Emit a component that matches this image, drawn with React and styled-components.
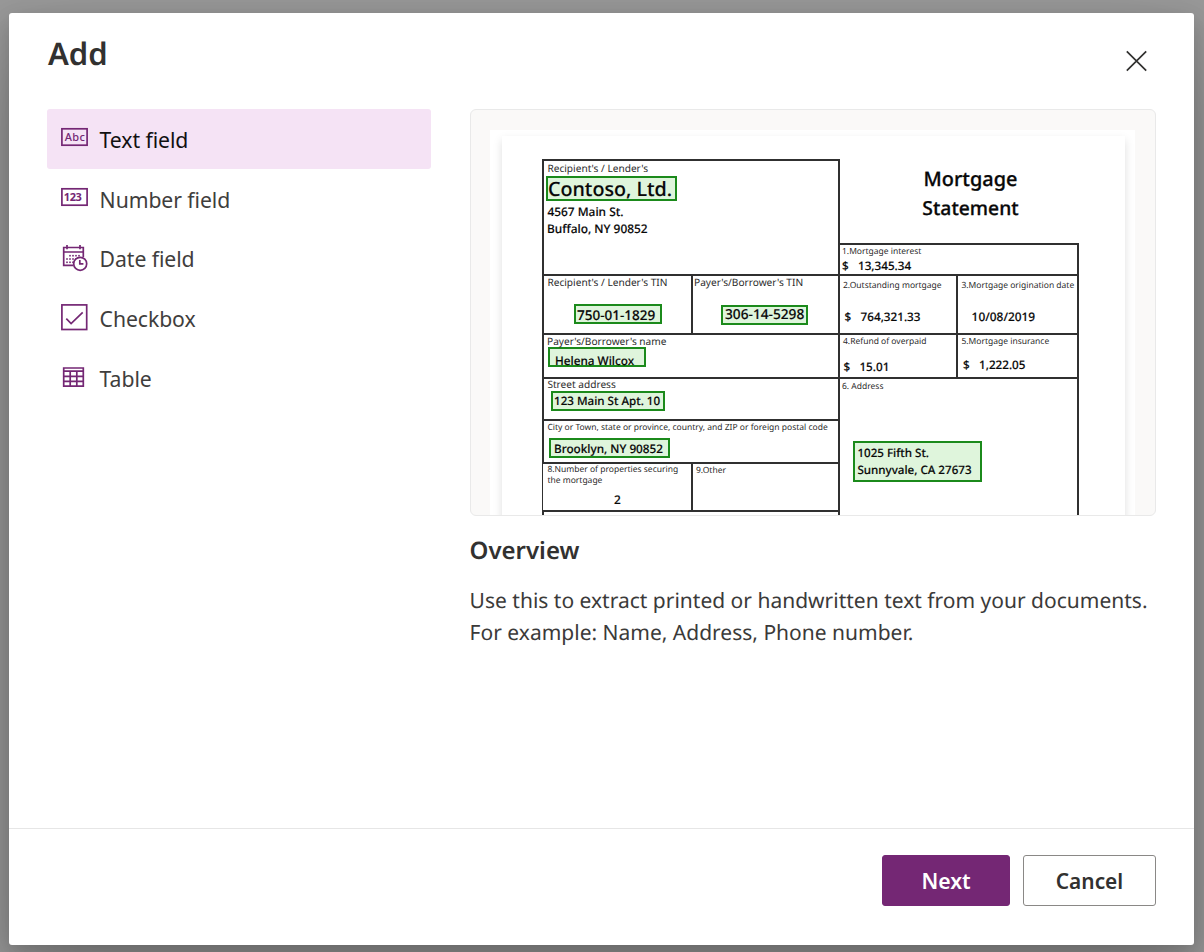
import React, { useState } from "react";
import styled, { createGlobalStyle } from "styled-components";

const purple = "#742774";
const ink = "#303030";

const GlobalStyle = createGlobalStyle`
  *, *::before, *::after { box-sizing: border-box; }
  body {
    margin: 0;
    font-family: "Noto Sans", "Open Sans", sans-serif;
    color: #323130;
    text-rendering: geometricPrecision;
  }
`;

const Overlay = styled.div`
  height: 952px;
  overflow: hidden;
  padding: 13px 10px 7px 9px;
  background: #999999;
`;

const Dialog = styled.section`
  display: flex;
  flex-direction: column;
  height: 932px;
  border-radius: 3px;
  background: #ffffff;
  box-shadow: 0 38px 86px rgba(0, 0, 0, 0.22), 0 7px 22px rgba(0, 0, 0, 0.18);
`;

const Header = styled.header`
  display: flex;
  justify-content: space-between;
  height: 96px;
  padding: 21px 43px 0 39px;
`;

const Title = styled.h1`
  margin: 0;
  font-size: 31px;
  font-weight: 600;
  line-height: 40px;
`;

const CloseButton = styled.button`
  width: 30px;
  height: 30px;
  margin-top: 12px;
  padding: 0;
  border: 0;
  background: none;
  svg { display: block; }
`;

const Body = styled.div`
  display: flex;
  flex: 1;
  gap: 39px;
  padding: 0 38px;
`;

const Nav = styled.nav`
  display: grid;
  width: 384px;
  grid-template-rows: 60px 60px 59px 60px 60px;
`;

const NavItem = styled.button`
  display: flex;
  align-items: flex-start;
  gap: 10.6px;
  padding: 16px 14px 0;
  border: 0;
  border-radius: 3px;
  background: ${(p) => (p.$active ? "#f5e3f5" : "transparent")};
  color: ${(p) => (p.$active ? "#111111" : "#3f3e3d")};
  font: inherit;
  font-size: 21.2px;
  letter-spacing: -0.07px;
  line-height: ${(p) => p.$line || 30}px;
  text-align: left;
  svg { display: block; flex: none; }
`;

const Detail = styled.main`
  width: 686px;
`;

const Preview = styled.div`
  height: 407px;
  overflow: hidden;
  padding: 20px 20px 0 19px;
  border: 1px solid #e9e9e9;
  border-radius: 6px;
  background: #faf9f8;
`;

const Scan = styled.div`
  height: 400px;
  overflow: hidden;
  padding: 6px 10px 0 12px;
  background: #ffffff;
`;

const Page = styled.div`
  display: flex;
  height: 420px;
  padding: 23px 45px 0 40px;
  background: #ffffff;
  box-shadow: 0 4px 9px rgba(0, 0, 0, 0.13);
  color: #080808;
`;

const LenderSide = styled.div`
  display: grid;
  width: 296px;
  grid-template-rows: 115px 59px 44px 42px 43px 48px 20px;
`;

const MortgageSide = styled.div`
  display: grid;
  width: 241px;
  grid-template-rows: 84px 31px 59px 44px 170px;
`;

const Columns = styled.div`
  display: grid;
  grid-template-columns: ${(p) => p.$cols};
`;

const Cell = styled.div`
  padding-left: ${(p) => p.$indent || 0}px;
  border: 0 solid ${ink};
  border-top-width: 2px;
  border-left-width: ${(p) => (p.$thin ? 1 : 2)}px;
  border-right-width: ${(p) => (p.$last ? 2 : 0)}px;
`;

const Label = styled.div`
  margin: ${(p) => p.$top || 0}px 0 0 ${(p) => p.$left || 0}px;
  color: #2b2b2b;
  font-size: ${(p) => (p.$small ? 8.5 : 10.15)}px;
  line-height: 10px;
  white-space: nowrap;
`;

const Value = styled.div`
  margin: ${(p) => p.$top || 0}px 0 0 ${(p) => p.$left || 0}px;
  font-size: 11.9px;
  font-weight: 500;
  line-height: 14px;
  white-space: nowrap;
  -webkit-text-stroke: 0.15px currentColor;
`;

const Amount = styled(Value)`
  display: grid;
  grid-template-columns: 16px 1fr;
  font-size: 11.7px;
`;

const Match = styled.div`
  width: ${(p) => p.$w}px;
  height: ${(p) => p.$h || 20}px;
  margin: ${(p) => p.$top}px 0 0 ${(p) => p.$left}px;
  padding: ${(p) => p.$pad || "0"};
  border: 2px solid #1b8a1b;
  background: #dff5dc;
  font-size: ${(p) => p.$size || 11.75}px;
  font-weight: 500;
  line-height: ${(p) => p.$line || 16}px;
  white-space: nowrap;
  -webkit-text-stroke: 0.15px currentColor;
`;

const FormTitle = styled.div`
  padding: 5px 0 0 22px;
  border-left: 2px solid ${ink};
  font-size: 19.9px;
  font-weight: 500;
  line-height: 29.3px;
  text-align: center;
  -webkit-text-stroke: 0.3px currentColor;
  & > span { font-size: 19.3px; }
`;

const Heading = styled.h2`
  margin: 19px 0 0 -0.5px;
  font-size: 24px;
  font-weight: 600;
  line-height: 32px;
`;

const Copy = styled.p`
  margin: 18px 0 0 -0.4px;
  color: #3b3a39;
  font-size: 21px;
  line-height: 32px;
  white-space: nowrap;
`;

const Footer = styled.footer`
  display: flex;
  justify-content: flex-end;
  gap: 13px;
  height: 117px;
  padding: 26px 38px 0 0;
  border-top: 1px solid #e6e6e6;
`;

const Button = styled.button`
  width: ${(p) => (p.$primary ? 128 : 133)}px;
  height: 51px;
  padding: 0;
  border: 1px solid ${(p) => (p.$primary ? purple : "#8a8886")};
  border-radius: 3px;
  background: ${(p) => (p.$primary ? purple : "#ffffff")};
  color: ${(p) => (p.$primary ? "#ffffff" : "#323130")};
  font: inherit;
  font-size: ${(p) => (p.$primary ? 21.2 : 20.9)}px;
  font-weight: 600;
`;

const IconText = styled.text`
  fill: ${purple};
  stroke: none;
  font-size: ${(p) => p.$size}px;
  font-weight: ${(p) => p.$weight || 600};
`;

function Icon({ children }) {
  return (
    <svg width="28" height="28" viewBox="0 0 28 28" fill="none" stroke={purple} strokeWidth="1.7">
      {children}
    </svg>
  );
}

const dots = [
  [9, 10.7], [12, 10.7], [15, 10.7], [18, 10.7],
  [6, 14], [9, 14], [12, 14], [15, 14],
  [6, 17.3], [9, 17.3], [12, 17.3],
];

const fields = [
  {
    name: "Text field",
    icon: (
      <Icon>
        <rect x="0.9" y="3.8" width="25.2" height="16.4" />
        <IconText $size={11} $weight={500} x="3.8" y="16" textLength="20">Abc</IconText>
      </Icon>
    ),
  },
  {
    name: "Number field",
    icon: (
      <Icon>
        <rect x="0.9" y="3.8" width="25.2" height="16.4" />
        <IconText $size={11} $weight={700} x="2.8" y="16" textLength="18">123</IconText>
      </Icon>
    ),
  },
  {
    name: "Date field",
    line: 28,
    icon: (
      <Icon>
        <path d="M12.5 20.3H2.7V2.5h19.6v9.6M2.7 7h19.6M6 0v4.3M19 0v4.3" />
        {dots.map(([x, y]) => (
          <rect key={`${x}-${y}`} x={x - 0.8} y={y - 0.8} width="1.6" height="1.6" fill={purple} stroke="none" />
        ))}
        <circle cx="19.2" cy="18.8" r="6.5" fill="#ffffff" />
        <path d="M18.8 15v3.9h3.6" />
      </Icon>
    ),
  },
  {
    name: "Checkbox",
    icon: (
      <Icon>
        <rect x="0.9" y="0.9" width="24.8" height="24.6" />
        <path d="M5.3 14.7l4.8 4.8L21.7 8.3" />
      </Icon>
    ),
  },
  {
    name: "Table",
    icon: (
      <Icon>
        <path d="M2.7 4h19.6v18.2H2.7zM2.7 7.2h19.6M2.7 12.3h19.6M2.7 17.3h19.6M9.2 7.2v15M15.8 7.2v15" />
      </Icon>
    ),
  },
];

function MortgageForm() {
  return (
    <Page>
      <LenderSide>
        <Cell>
          <Label $top={2} $left={3.4}>Recipient's / Lender's</Label>
          <Match $top={3} $left={2} $w={131} $h={25} $size={19.7} $line={22} $pad="0 0 0 -1px">Contoso, Ltd.</Match>
          <Value $top={4} $left={3.4}>4567 Main St.</Value>
          <Value $top={3} $left={3}>Buffalo, NY 90852</Value>
        </Cell>
        <Columns $cols="149px 1fr">
          <Cell>
            <Label $top={1} $left={3.4}>Recipient's / Lender's TIN</Label>
            <Match $top={17} $left={30} $w={88} $size={13.5} $pad="1px 0 0 1px">750-01-1829</Match>
          </Cell>
          <Cell>
            <Label $top={1} $left={1}>Payer's/Borrower's TIN</Label>
            <Match $top={18} $left={28} $w={87} $size={13.7} $pad="0 0 0 2px">306-14-5298</Match>
          </Cell>
        </Columns>
        <Cell>
          <Label $top={1} $left={3}>Payer's/Borrower's name</Label>
          <Match $top={1} $left={4} $w={98} $pad="4px 0 0 5px">Helena Wilcox</Match>
        </Cell>
        <Cell>
          <Label $left={3.4}>Street address</Label>
          <Match $top={2} $left={7} $w={114} $size={11.6} $pad="1px 0 0 1px">123 Main St Apt. 10</Match>
        </Cell>
        <Cell>
          <Label $small $top={2} $left={3.4}>City or Town, state or province, country, and ZIP or foreign postal code</Label>
          <Match $top={5} $left={5} $w={121} $pad="1px 0 0 3px">Brooklyn, NY 90852</Match>
        </Cell>
        <Columns $cols="149px 1fr">
          <Cell $thin $indent={1}>
            <Label $small $top={1} $left={3.4}>8.Number of properties securing</Label>
            <Label $small $top={1} $left={3.4}>the mortgage</Label>
            <Value $top={7} $left={70}>2</Value>
          </Cell>
          <Cell>
            <Label $small $top={2} $left={3}>9.Other</Label>
          </Cell>
        </Columns>
        <Cell />
      </LenderSide>
      <MortgageSide>
        <FormTitle>Mortgage<br /><span>Statement</span></FormTitle>
        <Cell $last>
          <Label $small $top={2} $left={2}>1.Mortgage interest</Label>
          <Amount $top={2} $left={2}><span>$</span><span>13,345.34</span></Amount>
        </Cell>
        <Columns $cols="118px 1fr">
          <Cell>
            <Label $small $top={5} $left={3}>2.Outstanding mortgage</Label>
            <Amount $top={19} $left={4.6}><span>$</span><span>764,321.33</span></Amount>
          </Cell>
          <Cell $last>
            <Label $small $top={5} $left={3.4}>3.Mortgage origination date</Label>
            <Value $top={19} $left={13.6}>10/08/2019</Value>
          </Cell>
        </Columns>
        <Columns $cols="118px 1fr">
          <Cell>
            <Label $small $top={2} $left={3}>4.Refund of overpaid</Label>
            <Amount $top={13} $left={3.4}><span>$</span><span>15.01</span></Amount>
          </Cell>
          <Cell $last>
            <Label $small $top={2} $left={3.4}>5.Mortgage insurance</Label>
            <Amount $top={11} $left={5}><span>$</span><span>1,222.05</span></Amount>
          </Cell>
        </Columns>
        <Cell $last>
          <Label $small $top={3} $left={2}>6. Address</Label>
          <Match $top={49} $left={13} $w={129} $h={41} $line={17} $size={11.6} $pad="2px 0 0 2.4px">
            1025 Fifth St.<br />Sunnyvale, CA 27673
          </Match>
        </Cell>
      </MortgageSide>
    </Page>
  );
}

export default function App() {
  const [active, setActive] = useState("Text field");
  return (
    <Overlay>
      <GlobalStyle />
      <Dialog role="dialog" aria-label="Add">
        <Header>
          <Title>Add</Title>
          <CloseButton aria-label="Close">
            <svg width="30" height="30" viewBox="0 0 30 30" stroke="#323130" strokeWidth="1.7">
              <path d="M5.8 5.3l19.4 19.4M25.2 5.3L5.8 24.7" />
            </svg>
          </CloseButton>
        </Header>
        <Body>
          <Nav>
            {fields.map((f) => (
              <NavItem key={f.name} $active={f.name === active} $line={f.line} onClick={() => setActive(f.name)}>
                {f.icon}
                <span>{f.name}</span>
              </NavItem>
            ))}
          </Nav>
          <Detail>
            <Preview>
              <Scan>
                <MortgageForm />
              </Scan>
            </Preview>
            <Heading>Overview</Heading>
            <Copy>
              Use this to extract printed or handwritten text from your documents.
              <br />
              For example: Name, Address, Phone number.
            </Copy>
          </Detail>
        </Body>
        <Footer>
          <Button $primary>Next</Button>
          <Button>Cancel</Button>
        </Footer>
      </Dialog>
    </Overlay>
  );
}
